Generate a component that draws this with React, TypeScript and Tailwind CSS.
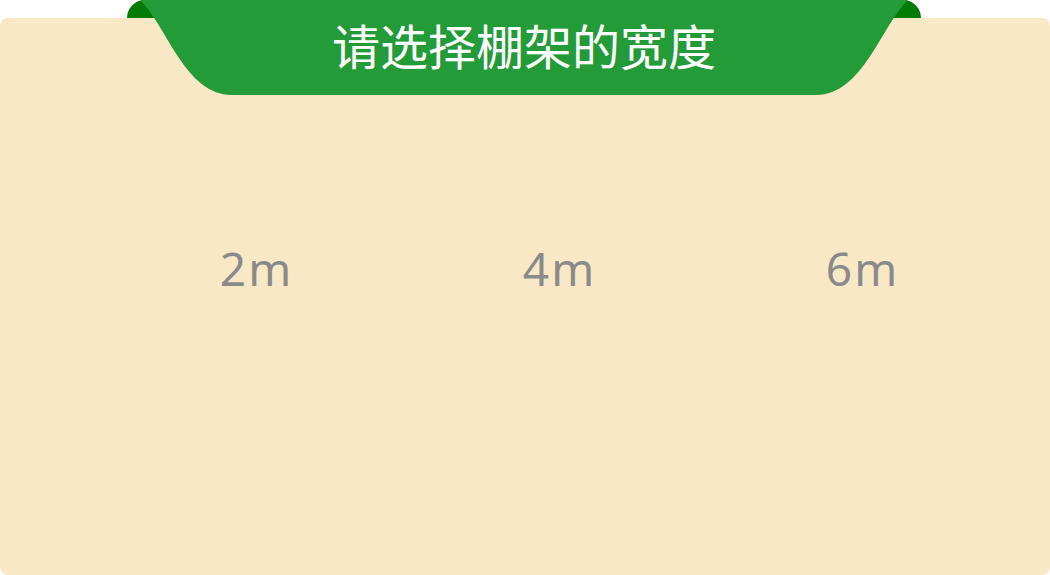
import React from "react";

const widths = ["2m", "4m", "6m"];

const Banner = () => {
  return (
    <div className="absolute left-[127px] top-0 w-[794px] h-[95px]">
      <svg width="794" height="95" viewBox="0 0 794 95" className="absolute inset-0">
        <path d="M0,18 A18,18 0 0 1 18,0 L44,0 L44,18 Z" fill="#027b07" />
        <path d="M750,0 L776,0 A18,18 0 0 1 794,18 L750,18 Z" fill="#027b07" />
        <path
          d="M13,0 C40,26 58,95 105,95 L689,95 C736,95 754,26 781,0 Z"
          fill="#239b38"
        />
      </svg>
      <div className="relative h-[88px] flex items-center justify-center text-white text-[48px] leading-none font-['Noto_Sans_CJK_SC',sans-serif]">
        请选择棚架的宽度
      </div>
    </div>
  );
};

export default function App() {
  return (
    <div className="relative w-[1050px] h-[575px] bg-white pt-[18px] font-['Noto_Sans','Noto_Sans_CJK_SC',sans-serif]">
      <div className="h-[557px] bg-[#f9e8c5] rounded-[8px] flex items-center pl-[105px]">
        {widths.map((w) => (
          <div
            key={w}
            className="w-[303px] flex justify-center text-[46px] text-[#8a8a8a] tracking-[2px] pb-[56px]"
          >
            {w}
          </div>
        ))}
      </div>
      <Banner />
    </div>
  );
}
